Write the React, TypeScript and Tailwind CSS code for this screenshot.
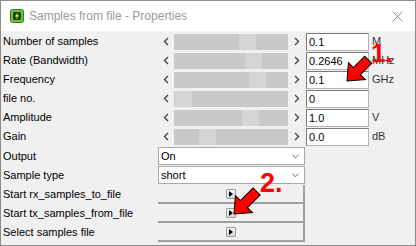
const sliderRows = [
  { label: "Number of samples", value: "0.1", unit: "M", thumb: 65 },
  { label: "Rate (Bandwidth)", value: "0.2646", unit: "MHz", thumb: 71 },
  { label: "Frequency", value: "0.1", unit: "GHz", thumb: 75 },
  { label: "file no.", value: "0", unit: "", thumb: 1 },
  { label: "Amplitude", value: "1.0", unit: "V", thumb: 68 },
  { label: "Gain", value: "0.0", unit: "dB", thumb: 25 },
];

const selectRows = [
  { label: "Output", value: "On" },
  { label: "Sample type", value: "short" },
];

const buttonRows = [
  "Start rx_samples_to_file",
  "Start tx_samples_from_file",
  "Select samples file",
];

function Chevron({ dir }: { dir: "left" | "right" }) {
  return (
    <svg width="6" height="9" viewBox="0 0 6 9">
      <polyline
        points={dir === "left" ? "5,1 1.5,4.5 5,8" : "1,1 4.5,4.5 1,8"}
        fill="none"
        stroke="#444"
        strokeWidth="1.4"
      />
    </svg>
  );
}

function RedArrow({ x, y, len }: { x: number; y: number; len: number }) {
  const pts = `0,0 14,-12 14,-5 ${len},-5 ${len},5 14,5 14,12`;
  return (
    <svg className="absolute left-0 top-0 pointer-events-none" width="416" height="246">
      <polygon
        points={pts}
        transform={`translate(${x} ${y}) rotate(-45)`}
        fill="#ff0000"
        stroke="#000"
        strokeWidth="1"
        strokeLinejoin="miter"
      />
    </svg>
  );
}

export default function App() {
  return (
    <div
      className="relative w-[416px] h-[246px] overflow-hidden border border-[#8c8c8c] bg-[#f0f0f0] flex flex-col"
      style={{ fontFamily: '"Liberation Sans", Arial, sans-serif' }}
    >
      {/* title bar */}
      <div className="h-[30px] bg-white flex items-center pl-[9px] pr-[12px] shrink-0">
        <svg width="14" height="14" viewBox="0 0 14 14">
          <rect x="0.5" y="0.5" width="13" height="13" rx="2" fill="#6cc13a" stroke="#2e7d1e" />
          <rect x="3" y="3" width="8" height="8" rx="1.5" fill="#1f3d12" />
          <polygon points="7.8,3.5 4.8,7.6 6.8,7.6 6,10.5 9.2,6.3 7.2,6.3" fill="#d8f040" />
        </svg>
        <span className="ml-[5px] text-[12px] text-[#9a9a9a]">Samples from file - Properties</span>
        <svg className="ml-auto" width="11" height="11" viewBox="0 0 11 11">
          <path d="M0.5 0.5 L10.5 10.5 M10.5 0.5 L0.5 10.5" stroke="#8a8a8a" strokeWidth="1" />
        </svg>
      </div>

      {/* property rows */}
      <div className="flex flex-col pt-[1px] text-[11px] text-black">
        {sliderRows.map((r) => (
          <div key={r.label} className="h-[19px] flex items-center">
            <div className="w-[157px] pl-[2px]">{r.label}</div>
            <div className="w-[16px] flex justify-center">
              <Chevron dir="left" />
            </div>
            <div className="w-[114px] h-[16px] flex">
              <div className="bg-[#c8c8c8]" style={{ width: r.thumb }} />
              <div className="w-[17px] bg-[#d5d5d5]" />
              <div className="flex-1 bg-[#c8c8c8]" />
            </div>
            <div className="w-[18px] flex justify-center">
              <Chevron dir="right" />
            </div>
            <div className="w-[63px] h-[18px] bg-white border border-[#b4b4b4] border-t-[#7a7a7a] border-l-[#7a7a7a] pl-[2px] leading-[16px]">
              {r.value}
            </div>
            <div className="ml-[3px] text-[#333]">{r.unit}</div>
          </div>
        ))}

        <div className="flex flex-col gap-[1px] pt-[1px]">
          {selectRows.map((r) => (
            <div key={r.label} className="h-[18px] flex items-center">
              <div className="w-[157px] pl-[2px]">{r.label}</div>
              <div className="w-[147px] h-[18px] bg-white border border-[#a8a8a8] flex items-center pl-[2px] pr-[5px]">
                <span>{r.value}</span>
                <svg className="ml-auto" width="7" height="5" viewBox="0 0 7 5">
                  <polyline points="0.5,0.8 3.5,3.8 6.5,0.8" fill="none" stroke="#666" strokeWidth="1" />
                </svg>
              </div>
            </div>
          ))}
        </div>

        <div className="flex flex-col pt-[1px]">
          {buttonRows.map((b) => (
            <div key={b} className="h-[19px] flex items-center">
              <div className="w-[157px] pl-[2px]">{b}</div>
              <div className="w-[147px] h-[19px] border-b-2 border-r-2 border-[#a0a0a0] flex items-center justify-center">
                <div className="w-[10px] h-[10px] rounded-[1px] border border-[#9a9a9a] bg-gradient-to-b from-[#fafafa] to-[#d8d8d8] flex items-center justify-center">
                  <svg width="4" height="6" viewBox="0 0 4 6">
                    <polygon points="0,0 4,3 0,6" fill="#000" />
                  </svg>
                </div>
              </div>
            </div>
          ))}
        </div>
      </div>

      {/* annotations */}
      <RedArrow x={346} y={80} len={30} />
      <RedArrow x={233} y={213} len={32} />
      <div className="absolute left-[370px] top-[39px] text-[26px] leading-none font-bold text-[#ff0000]">1.</div>
      <div className="absolute left-[259px] top-[169px] text-[27px] leading-none font-bold text-[#ff0000]">2.</div>
    </div>
  );
}
